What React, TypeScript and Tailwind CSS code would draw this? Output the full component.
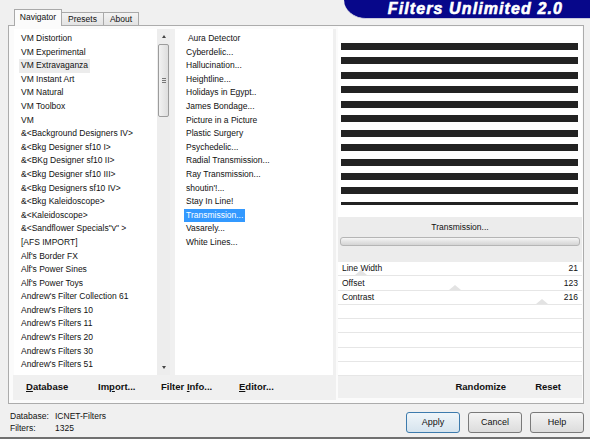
import React from "react";

const leftItems = [
  "VM Distortion",
  "VM Experimental",
  "VM Extravaganza",
  "VM Instant Art",
  "VM Natural",
  "VM Toolbox",
  "VM",
  "&<Background Designers IV>",
  "&<Bkg Designer sf10 I>",
  "&<BKg Designer sf10 II>",
  "&<Bkg Designer sf10 III>",
  "&<Bkg Designers sf10 IV>",
  "&<Bkg Kaleidoscope>",
  "&<Kaleidoscope>",
  "&<Sandflower Specials\"v\" >",
  "[AFS IMPORT]",
  "Alf's Border FX",
  "Alf's Power Sines",
  "Alf's Power Toys",
  "Andrew's Filter Collection 61",
  "Andrew's Filters 10",
  "Andrew's Filters 11",
  "Andrew's Filters 20",
  "Andrew's Filters 30",
  "Andrew's Filters 51",
];

const midItems = [
  " Aura Detector",
  "Cyberdelic...",
  "Hallucination...",
  "Heightline...",
  "Holidays in Egypt..",
  "James Bondage...",
  "Picture in a Picture",
  "Plastic Surgery",
  "Psychedelic...",
  "Radial Transmission...",
  "Ray Transmission...",
  "shoutin'!...",
  "Stay In Line!",
  "Transmission...",
  "Vasarely...",
  "White Lines...",
];

const sliders: { label: string; value: number | null }[] = [
  { label: "Line Width", value: 21 },
  { label: "Offset", value: 123 },
  { label: "Contrast", value: 216 },
  { label: "", value: null },
  { label: "", value: null },
  { label: "", value: null },
  { label: "", value: null },
  { label: "", value: null },
];

function WinButton({ label, primary }: { label: string; primary?: boolean }) {
  return (
    <div
      className={
        "flex h-[21px] w-[54px] items-center justify-center rounded-[3px] border bg-gradient-to-b text-[9px] " +
        (primary
          ? "border-[#3d7bad] from-[#f0f6fa] to-[#d6e4ee]"
          : "border-[#7a7a7a] from-[#f4f4f4] to-[#dcdcdc]")
      }
    >
      {label}
    </div>
  );
}

export default function App() {
  return (
    <div className="flex h-[439px] w-[590px] flex-col overflow-hidden bg-[#f0f0f0] font-['Liberation_Sans',Arial,sans-serif] text-[#111]">
      {/* header */}
      <div className="flex h-[25px] shrink-0">
        <div className="flex h-full items-end pl-[14px]">
          <div className="relative z-10 mb-[-1px] flex h-[17px] w-[48px] items-center justify-center border border-b-0 border-[#a9a9a9] bg-[#fbfbfb] pb-[1px] text-[8.5px]">
            Navigator
          </div>
          <div className="flex h-[13px] w-[42px] items-center justify-center border border-b-0 border-l-0 border-[#a9a9a9] bg-gradient-to-b from-[#f3f3f3] to-[#e3e3e3] text-[8.5px]">
            Presets
          </div>
          <div className="flex h-[13px] w-[35px] items-center justify-center border border-b-0 border-l-0 border-[#a9a9a9] bg-gradient-to-b from-[#f3f3f3] to-[#e3e3e3] text-[8.5px]">
            About
          </div>
        </div>
        <div className="ml-auto flex h-[19px] w-[246px] items-center justify-end rounded-bl-[22px_19px] border-b border-[#c9c9dc] bg-[#07078a] pr-[27px]">
          <span className="text-[16px] font-bold italic leading-none tracking-[1.1px] text-white [-webkit-text-stroke:0.6px_white]">
            Filters Unlimited 2.0
          </span>
        </div>
      </div>

      {/* main panel */}
      <div className="ml-[8px] flex h-[379px] w-[576px] shrink-0 border border-[#acacac] bg-[#fbfbfb]">
        {/* left block */}
        <div className="ml-[4px] flex w-[323px] flex-col pt-[3px]">
          <div className="flex h-[346px] pl-[1px]">
            {/* left list */}
            <div className="h-full w-[143px] overflow-hidden bg-white pl-[5px] pt-[3px]">
              {leftItems.map((t, i) => (
                <div key={i} className="h-[13.6px] whitespace-pre text-[8.5px] leading-[13.6px]">
                  <span className={"inline-block px-[2px] " + (i === 2 ? "bg-[#ececec]" : "")}>{t}</span>
                </div>
              ))}
            </div>
            {/* scrollbar */}
            <div className="flex h-full w-[13px] flex-col items-center bg-[#ededed]">
              <div className="flex h-[15px] items-center justify-center">
                <div className="h-0 w-0 border-x-[2.5px] border-b-[3px] border-x-transparent border-b-[#444]" />
              </div>
              <div className="flex h-[73px] w-[11px] flex-col items-center justify-center gap-[1px] rounded-[2px] border border-[#9c9c9c] bg-gradient-to-r from-[#f2f2f2] to-[#dedede]">
                <div className="h-[1px] w-[4px] bg-[#777]" />
                <div className="h-[1px] w-[4px] bg-[#777]" />
                <div className="h-[1px] w-[4px] bg-[#777]" />
              </div>
              <div className="flex-1" />
              <div className="flex h-[14px] items-center justify-center pb-[2px]">
                <div className="h-0 w-0 border-x-[2.5px] border-t-[3px] border-x-transparent border-t-[#444]" />
              </div>
            </div>
            <div className="w-[5px] bg-[#f0f0f0]" />
            {/* middle list */}
            <div className="h-full w-[158px] overflow-hidden bg-white pl-[9px] pt-[3px]">
              {midItems.map((t, i) => (
                <div key={i} className="h-[13.6px] whitespace-pre text-[8.5px] leading-[13.6px]">
                  <span
                    className={
                      "inline-block px-[2px] " + (t === "Transmission..." ? "bg-[#3399ff] text-white" : "")
                    }
                  >
                    {t}
                  </span>
                </div>
              ))}
            </div>
            <div className="flex-1 bg-[#f0f0f0]" />
          </div>
          {/* left buttons bar */}
          <div className="flex h-[25px] items-center bg-[#f0f0f0] pl-[13px] text-[9.5px] font-bold">
            <span className="w-[72px]">
              <span className="underline">D</span>atabase
            </span>
            <span className="w-[63px]">
              Im<span className="underline">p</span>ort...
            </span>
            <span className="w-[78px]">
              Filter <span className="underline">I</span>nfo...
            </span>
            <span>
              <span className="underline">E</span>ditor...
            </span>
          </div>
        </div>

        {/* right block */}
        <div className="ml-[2px] flex w-[244px] flex-col pt-[1px]">
          <div className="flex h-[190px] flex-col gap-[7.45px] overflow-hidden bg-white pl-[3px] pr-[4px] pt-[16px]">
            {Array.from({ length: 11 }).map((_, i) => (
              <div key={i} className="h-[7px] shrink-0 bg-[#222222]" />
            ))}
            <div className="h-[3px] shrink-0 bg-[#222222]" />
          </div>
          <div className="flex h-[20px] items-center justify-center bg-[#ececec] text-[8.5px]">Transmission...</div>
          <div className="flex h-[9px] bg-[#ececec] px-[2px]">
            <div className="h-full flex-1 rounded-[3px] border border-[#b5b5b5] bg-gradient-to-b from-[#f6f6f6] via-[#e4e4e4] to-[#d4d4d4]" />
          </div>
          <div className="h-[16px] bg-[#ececec]" />
          {sliders.map((s, i) => (
            <div
              key={i}
              className="relative flex h-[14.25px] items-center justify-between border-b border-[#e6e6e6] bg-white pl-[4px] pr-[4px] text-[8.5px]"
            >
              {s.value !== null && (
                <div
                  className="absolute bottom-0 h-0 w-0 border-x-[6px] border-b-[5px] border-x-transparent border-b-[#e3e3e3]"
                  style={{ left: 3 + (s.value / 255) * 237 - 6 }}
                />
              )}
              <span className="relative">{s.label}</span>
              <span className="relative">{s.value ?? ""}</span>
            </div>
          ))}
          <div className="flex h-[22px] items-center justify-end bg-[#f0f0f0] pr-[21px] text-[9.5px] font-bold">
            <span className="mr-[29px]">Randomize</span>
            <span>Reset</span>
          </div>
        </div>
      </div>

      {/* bottom area */}
      <div className="flex flex-1">
        <div className="pl-[10px] pt-[6px] text-[8.5px] leading-[12px]">
          <div className="flex">
            <span className="w-[45px]">Database:</span>
            <span>ICNET-Filters</span>
          </div>
          <div className="flex">
            <span className="w-[45px]">Filters:</span>
            <span>1325</span>
          </div>
        </div>
        <div className="ml-auto flex gap-[8px] pr-[6px] pt-[8px]">
          <WinButton label="Apply" primary />
          <WinButton label="Cancel" />
          <WinButton label="Help" />
        </div>
      </div>
      <div className="h-[2px] shrink-0 bg-[#707070]" />
    </div>
  );
}
